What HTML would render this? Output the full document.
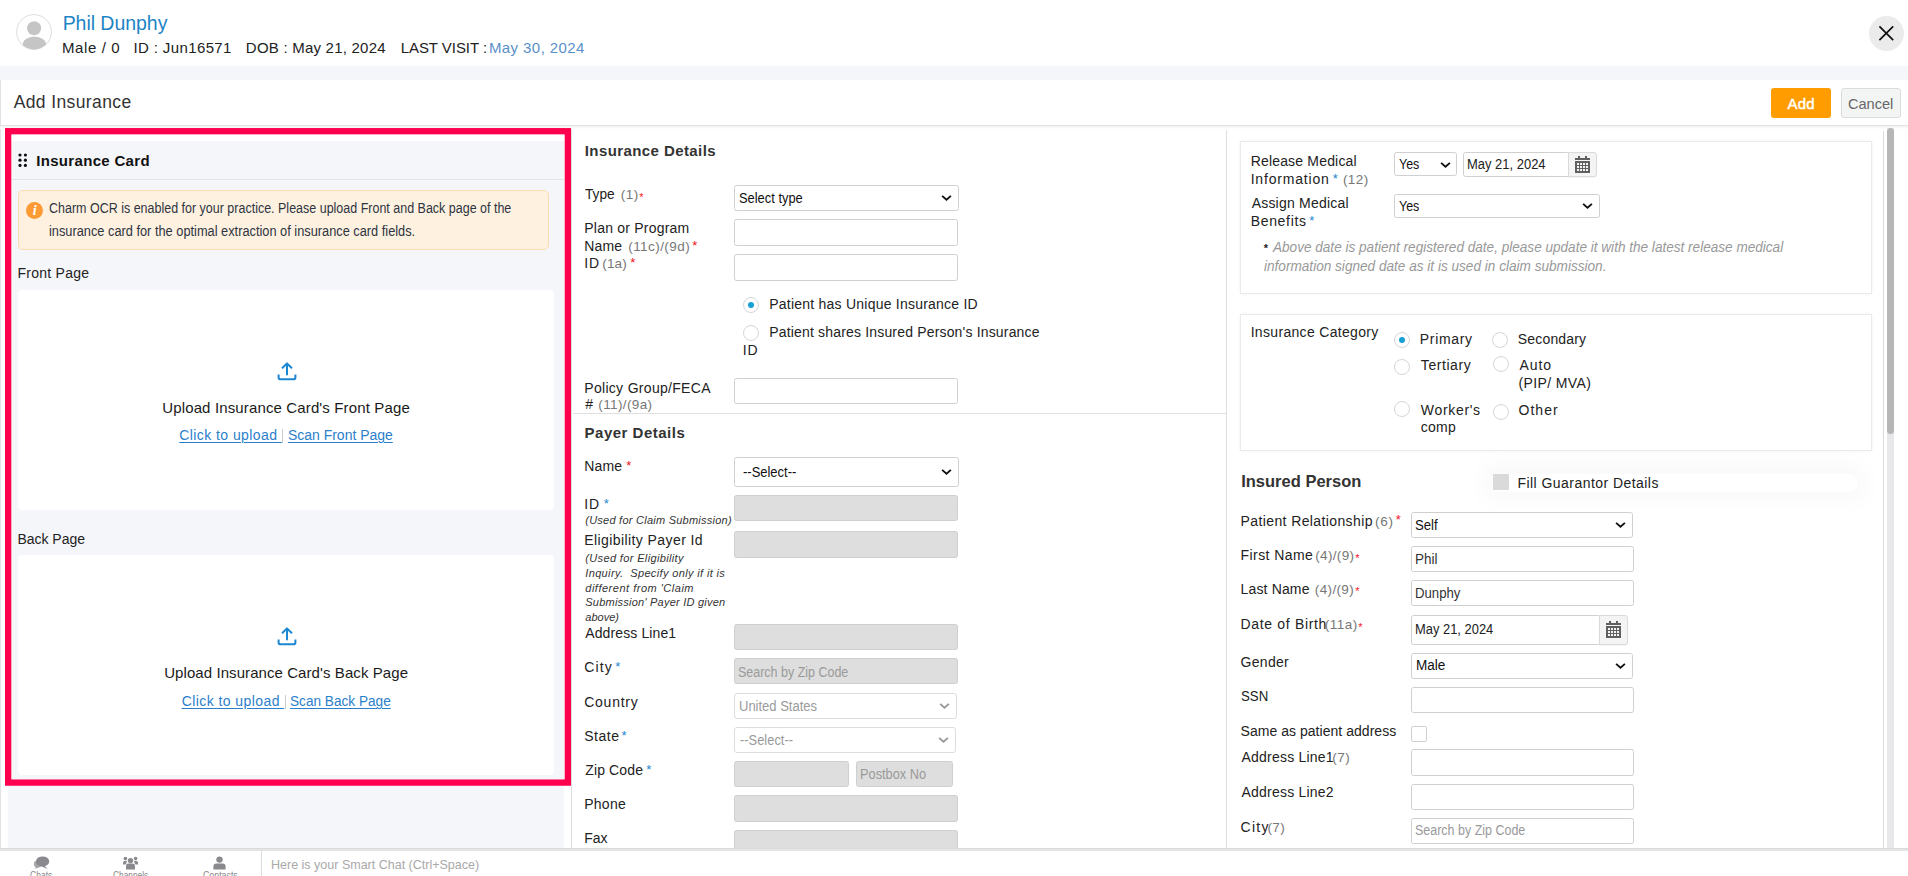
<!DOCTYPE html>
<html lang="en"><head><meta charset="utf-8"><title>Add Insurance</title>
<style>
html,body{margin:0;padding:0;background:#fff;}
body{width:1908px;height:876px;overflow:hidden;font-family:"Liberation Sans",sans-serif;}
#root{position:relative;width:1908px;height:876px;overflow:hidden;background:#fff;}
#root div,#root svg{position:absolute;box-sizing:border-box;}
.t{position:absolute;white-space:pre;line-height:1;transform-origin:0 0;}
.in{background:#fff;border:1px solid #d0d0d0;border-radius:2.5px;}
.dis{background:#dedede;border:1px solid #cfcfcf;border-radius:2.5px;}
.sel2{background:#fff;border:1px solid #ddd;border-radius:3px;}
.card{background:#fff;border:1px solid #ebebeb;box-shadow:0 0 3px rgba(0,0,0,0.06);}
.rad{background:#fff;border:1px solid #d6d6d6;border-radius:50%;}

</style></head><body>
<div id="root">
<div style="left:0px;top:66px;width:1908px;height:14px;background:#f5f6fa;"></div>
<div style="left:0px;top:80px;width:1px;height:768px;background:#e2e2e2;"></div>
<div style="left:0px;top:125px;width:1908px;height:1px;background:#e3e3e3;"></div>
<div style="left:0px;top:126px;width:1908px;height:3px;background:linear-gradient(#f1f1f1,#ffffff);"></div>
<svg style="left:16px;top:14px" width="36" height="36" viewBox="0 0 36 36"><defs><clipPath id="av"><circle cx="18" cy="18" r="17.4"/></clipPath></defs><circle cx="18" cy="18" r="17.4" fill="#fff" stroke="#dcdcdc" stroke-width="1"/><g clip-path="url(#av)" fill="#c5c5c5"><circle cx="18.1" cy="14.3" r="7"/><ellipse cx="18.4" cy="31" rx="11.8" ry="8.6"/></g></svg>
<svg style="left:1869px;top:16px" width="35" height="35" viewBox="0 0 35 35"><circle cx="17.5" cy="17.5" r="17.5" fill="#ebebeb"/><path d="M10.4 10.4 L24.2 24.2 M24.2 10.4 L10.4 24.2" stroke="#111" stroke-width="1.7" fill="none"/></svg>
<div style="left:1771px;top:88px;width:60px;height:30px;background:#ff9c00;border-radius:3px;"></div>
<div style="left:1841px;top:88px;width:60px;height:30px;background:#f3f4f4;border:1px solid #dcdcdc;border-radius:3px;"></div>
<div style="left:8px;top:141px;width:556px;height:707px;background:#f5f6fa;"></div>
<div style="left:12px;top:179px;width:552px;height:1px;background:#e4e6ec;"></div>
<svg style="left:18px;top:153px" width="10" height="15" viewBox="0 0 10 15" fill="#111"><circle cx="2" cy="2" r="1.6"/><circle cx="7.4" cy="2" r="1.6"/><circle cx="2" cy="7.2" r="1.6"/><circle cx="7.4" cy="7.2" r="1.6"/><circle cx="2" cy="12.4" r="1.6"/><circle cx="7.4" cy="12.4" r="1.6"/></svg>
<div style="left:18px;top:190px;width:531px;height:60px;background:#fff1e0;border:1px solid #fcdcae;border-radius:5px;"></div>
<div style="left:26px;top:202px;width:17px;height:17px;background:#fd9a33;border-radius:50%;"></div>
<div style="left:18px;top:290px;width:536px;height:220px;background:#fff;border-radius:4px;"></div>
<div style="left:18px;top:555px;width:536px;height:219.5px;background:#fff;border-radius:4px;"></div>
<svg style="left:276.5px;top:361.6px" width="20" height="19" viewBox="0 0 20 19" fill="none" stroke="#1c86d1" stroke-width="2" stroke-linecap="round" stroke-linejoin="round"><path d="M10 12.5 V2 M5.6 5.8 L10 1.4 L14.4 5.8" /><path d="M1.6 12.6 V15.4 Q1.6 17.2 3.4 17.2 H16.6 Q18.4 17.2 18.4 15.4 V12.6" stroke-linecap="butt"/></svg>
<svg style="left:276.5px;top:626.6px" width="20" height="19" viewBox="0 0 20 19" fill="none" stroke="#1c86d1" stroke-width="2" stroke-linecap="round" stroke-linejoin="round"><path d="M10 12.5 V2 M5.6 5.8 L10 1.4 L14.4 5.8" /><path d="M1.6 12.6 V15.4 Q1.6 17.2 3.4 17.2 H16.6 Q18.4 17.2 18.4 15.4 V12.6" stroke-linecap="butt"/></svg>
<div style="left:282px;top:429px;width:1px;height:14px;background:#ccc;"></div>
<div style="left:284.5px;top:695px;width:1px;height:14px;background:#ccc;"></div>
<div style="left:571px;top:129px;width:1px;height:719px;background:#dedede;"></div>
<div style="left:1226px;top:130px;width:1px;height:718px;background:#dedede;"></div>
<div style="left:1883px;top:131px;width:1px;height:717px;background:#dadada;"></div>
<div style="left:1887px;top:128px;width:7px;height:720px;background:#e8e8ea;"></div>
<div style="left:1887px;top:128px;width:7px;height:305.5px;background:#b6b6b6;border-radius:3.5px;"></div>
<div style="left:573px;top:413px;width:653px;height:1px;background:#e0e0e0;"></div>
<div class="in" style="left:734px;top:185px;width:225px;height:26px;"></div>
<svg style="left:941px;top:195px" width="11" height="7" viewBox="0 0 11 7" fill="none" stroke="#111" stroke-width="1.9" stroke-linejoin="miter"><path d="M1.1 0.9 L5.5 4.7 L9.9 0.9"/></svg>
<div class="in" style="left:734px;top:219px;width:224px;height:27px;"></div>
<div class="in" style="left:734px;top:254px;width:224px;height:27px;"></div>
<div class="rad" style="left:743px;top:297px;width:16px;height:16px;"></div>
<div style="left:748px;top:302px;width:6px;height:6px;border-radius:50%;background:#18a0d4;"></div>
<div class="rad" style="left:743px;top:325px;width:16px;height:16px;"></div>
<div class="in" style="left:734px;top:378px;width:224px;height:26px;"></div>
<div class="in" style="left:734px;top:457px;width:225px;height:30px;"></div>
<svg style="left:941px;top:469px" width="11" height="7" viewBox="0 0 11 7" fill="none" stroke="#111" stroke-width="1.9" stroke-linejoin="miter"><path d="M1.1 0.9 L5.5 4.7 L9.9 0.9"/></svg>
<div class="dis" style="left:734px;top:495px;width:224px;height:26px;"></div>
<div class="dis" style="left:734px;top:531px;width:224px;height:27px;"></div>
<div class="dis" style="left:734px;top:624px;width:224px;height:26px;"></div>
<div class="dis" style="left:734px;top:658px;width:224px;height:26px;"></div>
<div class="sel2" style="left:734px;top:693px;width:223px;height:26px;"></div>
<svg style="left:938.5px;top:703px" width="11" height="7" viewBox="0 0 11 7" fill="none" stroke="#999" stroke-width="1.9" stroke-linejoin="miter"><path d="M1.1 0.9 L5.5 4.7 L9.9 0.9"/></svg>
<div class="sel2" style="left:734px;top:727px;width:222px;height:26px;"></div>
<svg style="left:938px;top:737px" width="11" height="7" viewBox="0 0 11 7" fill="none" stroke="#999" stroke-width="1.9" stroke-linejoin="miter"><path d="M1.1 0.9 L5.5 4.7 L9.9 0.9"/></svg>
<div class="dis" style="left:734px;top:761px;width:115px;height:26px;"></div>
<div class="dis" style="left:856px;top:761px;width:97px;height:26px;"></div>
<div class="dis" style="left:734px;top:795px;width:224px;height:27px;"></div>
<div class="dis" style="left:734px;top:830px;width:224px;height:26px;"></div>
<div class="card" style="left:1240px;top:141px;width:632px;height:153px;"></div>
<div class="card" style="left:1240px;top:313.5px;width:632px;height:137px;"></div>
<div class="in" style="left:1394px;top:152px;width:63px;height:24px;"></div>
<svg style="left:1439.5px;top:161.5px" width="11" height="7" viewBox="0 0 11 7" fill="none" stroke="#111" stroke-width="1.9" stroke-linejoin="miter"><path d="M1.1 0.9 L5.5 4.7 L9.9 0.9"/></svg>
<div class="in" style="left:1463px;top:152px;width:107px;height:25px;"></div>
<div style="left:1568px;top:152px;width:29px;height:25px;background:#f4f4f4;border:1px solid #dadada;border-radius:0 3px 3px 0;box-shadow:0 1px 1px rgba(0,0,0,0.04);"></div>
<svg style="left:1575px;top:156px" width="15" height="17" viewBox="0 0 15 17" shape-rendering="crispEdges"><rect x="3" y="0" width="2" height="2" fill="#606060"/><rect x="10" y="0" width="2" height="2" fill="#606060"/><rect x="0" y="2" width="15" height="2" fill="#606060"/><rect x="0" y="5" width="15" height="12" fill="#606060"/><rect x="2" y="7" width="2" height="2" fill="#f4f4f4"/><rect x="5" y="7" width="2" height="2" fill="#f4f4f4"/><rect x="8" y="7" width="2" height="2" fill="#f4f4f4"/><rect x="11" y="7" width="2" height="2" fill="#f4f4f4"/><rect x="2" y="10" width="2" height="2" fill="#f4f4f4"/><rect x="5" y="10" width="2" height="2" fill="#f4f4f4"/><rect x="8" y="10" width="2" height="2" fill="#f4f4f4"/><rect x="11" y="10" width="2" height="2" fill="#f4f4f4"/><rect x="2" y="13" width="2" height="2" fill="#f4f4f4"/><rect x="5" y="13" width="2" height="2" fill="#f4f4f4"/><rect x="8" y="13" width="2" height="2" fill="#f4f4f4"/><rect x="11" y="13" width="2" height="2" fill="#f4f4f4"/></svg>
<div class="in" style="left:1394px;top:194px;width:206px;height:24px;"></div>
<svg style="left:1582px;top:203px" width="11" height="7" viewBox="0 0 11 7" fill="none" stroke="#111" stroke-width="1.9" stroke-linejoin="miter"><path d="M1.1 0.9 L5.5 4.7 L9.9 0.9"/></svg>
<div class="rad" style="left:1393.8px;top:331.8px;width:16px;height:16px;"></div>
<div style="left:1398.8px;top:336.8px;width:6px;height:6px;border-radius:50%;background:#18a0d4;"></div>
<div class="rad" style="left:1491.8px;top:331.8px;width:16px;height:16px;"></div>
<div class="rad" style="left:1393.8px;top:358.8px;width:16px;height:16px;"></div>
<div class="rad" style="left:1492.8px;top:356.1px;width:16px;height:16px;"></div>
<div class="rad" style="left:1393.8px;top:401px;width:16px;height:16px;"></div>
<div class="rad" style="left:1492.8px;top:403.8px;width:16px;height:16px;"></div>
<div style="left:1493px;top:473.5px;width:365px;height:18.5px;background:#fff;border-radius:2px 9px 9px 2px;box-shadow:0 0 24px 8px rgba(0,0,0,0.032);"></div>
<div style="left:1493px;top:474px;width:16px;height:16px;background:#dadada;"></div>
<div class="in" style="left:1411px;top:512px;width:222px;height:26px;"></div>
<svg style="left:1615px;top:522px" width="11" height="7" viewBox="0 0 11 7" fill="none" stroke="#111" stroke-width="1.9" stroke-linejoin="miter"><path d="M1.1 0.9 L5.5 4.7 L9.9 0.9"/></svg>
<div class="in" style="left:1411px;top:546px;width:223px;height:26px;"></div>
<div class="in" style="left:1411px;top:580px;width:223px;height:26px;"></div>
<div class="in" style="left:1411px;top:615px;width:190px;height:30px;"></div>
<div style="left:1599px;top:615px;width:29px;height:30px;background:#f4f4f4;border:1px solid #dadada;border-radius:0 3px 3px 0;box-shadow:0 1px 1px rgba(0,0,0,0.04);"></div>
<svg style="left:1606px;top:621px" width="15" height="17" viewBox="0 0 15 17" shape-rendering="crispEdges"><rect x="3" y="0" width="2" height="2" fill="#606060"/><rect x="10" y="0" width="2" height="2" fill="#606060"/><rect x="0" y="2" width="15" height="2" fill="#606060"/><rect x="0" y="5" width="15" height="12" fill="#606060"/><rect x="2" y="7" width="2" height="2" fill="#f4f4f4"/><rect x="5" y="7" width="2" height="2" fill="#f4f4f4"/><rect x="8" y="7" width="2" height="2" fill="#f4f4f4"/><rect x="11" y="7" width="2" height="2" fill="#f4f4f4"/><rect x="2" y="10" width="2" height="2" fill="#f4f4f4"/><rect x="5" y="10" width="2" height="2" fill="#f4f4f4"/><rect x="8" y="10" width="2" height="2" fill="#f4f4f4"/><rect x="11" y="10" width="2" height="2" fill="#f4f4f4"/><rect x="2" y="13" width="2" height="2" fill="#f4f4f4"/><rect x="5" y="13" width="2" height="2" fill="#f4f4f4"/><rect x="8" y="13" width="2" height="2" fill="#f4f4f4"/><rect x="11" y="13" width="2" height="2" fill="#f4f4f4"/></svg>
<div class="in" style="left:1411px;top:653px;width:222px;height:26px;"></div>
<svg style="left:1615px;top:663px" width="11" height="7" viewBox="0 0 11 7" fill="none" stroke="#111" stroke-width="1.9" stroke-linejoin="miter"><path d="M1.1 0.9 L5.5 4.7 L9.9 0.9"/></svg>
<div class="in" style="left:1411px;top:687px;width:223px;height:26px;"></div>
<div style="left:1411px;top:726px;width:16px;height:16px;background:#fff;border:1px solid #d0d0d0;border-radius:2px;"></div>
<div class="in" style="left:1411px;top:749px;width:223px;height:27px;"></div>
<div class="in" style="left:1411px;top:784px;width:223px;height:26px;"></div>
<div class="in" style="left:1411px;top:818px;width:223px;height:26px;"></div>
<div style="left:0px;top:848px;width:1908px;height:28px;background:#fff;"></div>
<div style="left:0px;top:848px;width:1908px;height:1px;background:#dbdbdb;"></div>
<div style="left:0px;top:849px;width:1908px;height:2px;background:#e3e4e6;"></div>
<div style="left:261px;top:851px;width:1px;height:25px;background:#dcdcdc;"></div>
<svg style="left:33px;top:856px" width="17" height="14" viewBox="0 0 17 14" fill="#8a8a8e"><ellipse cx="9.6" cy="5.4" rx="6.6" ry="5"/><path d="M11 9 L14.4 13 L8 10z"/><ellipse cx="5" cy="8" rx="4.2" ry="3.4" opacity="0.75"/><path d="M3 10.4 L1.6 13 L6 11z" opacity="0.75"/></svg>
<svg style="left:123px;top:856px" width="15" height="14" viewBox="0 0 15 14" fill="#8a8a8e"><circle cx="7.5" cy="4.6" r="2.7"/><path d="M3 13.4 V10 Q3 7.6 5.4 7.6 H9.6 Q12 7.6 12 10 V13.4z"/><circle cx="2.4" cy="2.6" r="1.8"/><circle cx="12.6" cy="2.6" r="1.8"/><path d="M0 8.6 V6.6 Q0 5 1.6 5 H4 Q3.6 7 2.6 8.6z"/><path d="M15 8.6 V6.6 Q15 5 13.4 5 H11 Q11.4 7 12.4 8.6z"/></svg>
<svg style="left:213px;top:856px" width="13" height="14" viewBox="0 0 13 14" fill="#8a8a8e"><circle cx="6.5" cy="3.6" r="3.2"/><path d="M0.4 13.6 V10.4 Q0.4 7.4 3.4 7.4 H9.6 Q12.6 7.4 12.6 10.4 V13.6z"/></svg>
<svg style="left:0;top:0" width="580" height="800" viewBox="0 0 580 800"><rect x="8.15" y="131.2" width="559.7" height="651.4" fill="none" stroke="#ff004f" stroke-width="6.3"/></svg>
<span class="t" style="left:62.65px;top:12px;line-height:22px;font-size:19.5px;color:#1d84c6;letter-spacing:-0.040px;">Phil Dunphy</span>
<span class="t" style="left:61.95px;top:39px;line-height:17px;font-size:15px;color:#222;letter-spacing:0.629px;">Male / 0</span>
<span class="t" style="left:133.45px;top:39px;line-height:17px;font-size:15px;color:#222;letter-spacing:0.383px;">ID : Jun16571</span>
<span class="t" style="left:245.85px;top:39px;line-height:17px;font-size:15px;color:#222;letter-spacing:0.224px;">DOB : May 21, 2024</span>
<span class="t" style="left:400.65px;top:39px;line-height:17px;font-size:15px;color:#222;letter-spacing:-0.045px;">LAST VISIT :</span>
<span class="t" style="left:488.95px;top:39px;line-height:17px;font-size:15px;color:#5b90c9;letter-spacing:0.418px;">May 30, 2024</span>
<span class="t" style="left:13.65px;top:92px;line-height:20px;font-size:17.5px;color:#333;letter-spacing:0.392px;">Add Insurance</span>
<span class="t" style="left:1787.45px;top:95px;line-height:17px;font-size:15px;color:#fff;letter-spacing:0.250px;-webkit-text-stroke:0.45px #fff;">Add</span>
<span class="t" style="left:1848.28px;top:95px;line-height:17px;font-size:15px;color:#666;transform:scaleX(0.9709);">Cancel</span>
<span class="t" style="left:36.25px;top:152px;line-height:17px;font-size:15px;color:#111;font-weight:700;letter-spacing:0.315px;">Insurance Card</span>
<span class="t" style="left:32.85px;top:203px;line-height:16px;font-size:14px;color:#fff;font-weight:700;font-style:italic;font-family:'Liberation Serif',serif;">i</span>
<span class="t" style="left:48.77px;top:200px;line-height:16px;font-size:14px;color:#2d3542;transform:scaleX(0.8920);">Charm OCR is enabled for your practice. Please upload Front and Back page of the</span>
<span class="t" style="left:48.75px;top:223px;line-height:16px;font-size:14px;color:#2d3542;transform:scaleX(0.9137);">insurance card for the optimal extraction of insurance card fields.</span>
<span class="t" style="left:17.45px;top:265px;line-height:16px;font-size:14px;color:#222;letter-spacing:0.256px;">Front Page</span>
<span class="t" style="left:162.25px;top:399px;line-height:17px;font-size:15px;color:#1a1a1a;letter-spacing:0.136px;">Upload Insurance Card's Front Page</span>
<span class="t" style="left:179.25px;top:427px;line-height:16px;font-size:14px;color:#2b80cb;letter-spacing:0.429px;text-decoration:underline;text-underline-offset:2px;text-decoration-thickness:1px;">Click to upload </span>
<span class="t" style="left:287.95px;top:427px;line-height:16px;font-size:14px;color:#2b80cb;letter-spacing:-0.014px;text-decoration:underline;text-underline-offset:2px;text-decoration-thickness:1px;">Scan Front Page</span>
<span class="t" style="left:17.45px;top:531px;line-height:16px;font-size:14px;color:#222;letter-spacing:-0.025px;">Back Page</span>
<span class="t" style="left:164.15px;top:664px;line-height:17px;font-size:15px;color:#1a1a1a;letter-spacing:0.078px;">Upload Insurance Card's Back Page</span>
<span class="t" style="left:181.65px;top:693px;line-height:16px;font-size:14px;color:#2b80cb;letter-spacing:0.429px;text-decoration:underline;text-underline-offset:2px;text-decoration-thickness:1px;">Click to upload </span>
<span class="t" style="left:289.78px;top:693px;line-height:16px;font-size:14px;color:#2b80cb;transform:scaleX(0.9735);text-decoration:underline;text-underline-offset:2px;text-decoration-thickness:1px;">Scan Back Page</span>
<span class="t" style="left:584.75px;top:142px;line-height:17px;font-size:15px;color:#333;font-weight:700;letter-spacing:0.412px;">Insurance Details</span>
<span class="t" style="left:585.25px;top:186px;line-height:16px;font-size:14px;color:#222;transform:scaleX(0.9764);">Type</span>
<span class="t" style="left:620.75px;top:187px;line-height:15px;font-size:13.5px;color:#777;letter-spacing:0.450px;">(1)</span>
<span class="t" style="left:639.25px;top:191px;line-height:12px;font-size:11px;color:#f3141f;">*</span>
<span class="t" style="left:584.25px;top:220px;line-height:16px;font-size:14px;color:#222;letter-spacing:0.221px;">Plan or Program</span>
<span class="t" style="left:584.25px;top:238px;line-height:16px;font-size:14px;color:#222;letter-spacing:0.133px;">Name</span>
<span class="t" style="left:628.25px;top:239px;line-height:15px;font-size:13.5px;color:#777;letter-spacing:0.433px;">(11c)/(9d)</span>
<span class="t" style="left:692.25px;top:238px;line-height:15px;font-size:13px;color:#f3141f;">*</span>
<span class="t" style="left:584.25px;top:255px;line-height:16px;font-size:14px;color:#222;letter-spacing:0.900px;">ID</span>
<span class="t" style="left:602.25px;top:256px;line-height:15px;font-size:13.5px;color:#777;letter-spacing:0.133px;">(1a)</span>
<span class="t" style="left:630.25px;top:255px;line-height:15px;font-size:13px;color:#f3141f;">*</span>
<span class="t" style="left:738.84px;top:190px;line-height:16px;font-size:14px;color:#111;transform:scaleX(0.9202);">Select type</span>
<span class="t" style="left:769.25px;top:296px;line-height:16px;font-size:14px;color:#222;letter-spacing:0.230px;">Patient has Unique Insurance ID</span>
<span class="t" style="left:769.25px;top:324px;line-height:16px;font-size:14px;color:#222;letter-spacing:0.172px;">Patient shares Insured Person's Insurance</span>
<span class="t" style="left:742.65px;top:342px;line-height:16px;font-size:14px;color:#222;letter-spacing:0.900px;">ID</span>
<span class="t" style="left:584.25px;top:380px;line-height:16px;font-size:14px;color:#222;letter-spacing:0.306px;">Policy Group/FECA</span>
<span class="t" style="left:585.15px;top:396px;line-height:16px;font-size:14px;color:#222;">#</span>
<span class="t" style="left:598.25px;top:397px;line-height:15px;font-size:13.5px;color:#777;letter-spacing:0.387px;">(11)/(9a)</span>
<span class="t" style="left:584.55px;top:424px;line-height:17px;font-size:15px;color:#333;font-weight:700;letter-spacing:0.500px;">Payer Details</span>
<span class="t" style="left:584.25px;top:458px;line-height:16px;font-size:14px;color:#222;letter-spacing:0.133px;">Name</span>
<span class="t" style="left:626.25px;top:458px;line-height:15px;font-size:13px;color:#f3141f;">*</span>
<span class="t" style="left:742.56px;top:464px;line-height:16px;font-size:14px;color:#111;transform:scaleX(0.9259);">--Select--</span>
<span class="t" style="left:584.25px;top:496px;line-height:16px;font-size:14px;color:#222;letter-spacing:0.900px;">ID</span>
<span class="t" style="left:603.75px;top:496px;line-height:15px;font-size:13px;color:#1c86d1;">*</span>
<span class="t" style="left:585.25px;top:514px;line-height:12px;font-size:11px;color:#333;font-style:italic;letter-spacing:0.246px;">(Used for Claim Submission)</span>
<span class="t" style="left:584.25px;top:532px;line-height:16px;font-size:14px;color:#222;letter-spacing:0.416px;">Eligibility Payer Id</span>
<span class="t" style="left:585.25px;top:552px;line-height:12px;font-size:11px;color:#333;font-style:italic;letter-spacing:0.360px;">(Used for Eligibility</span>
<span class="t" style="left:585.25px;top:567px;line-height:12px;font-size:11px;color:#333;font-style:italic;letter-spacing:0.360px;">Inquiry.  Specify only if it is</span>
<span class="t" style="left:585.25px;top:582px;line-height:12px;font-size:11px;color:#333;font-style:italic;letter-spacing:0.510px;">different from 'Claim</span>
<span class="t" style="left:585.25px;top:596px;line-height:12px;font-size:11px;color:#333;font-style:italic;letter-spacing:0.232px;">Submission' Payer ID given</span>
<span class="t" style="left:585.25px;top:611px;line-height:12px;font-size:11px;color:#333;font-style:italic;letter-spacing:0.020px;">above)</span>
<span class="t" style="left:585.25px;top:625px;line-height:16px;font-size:14px;color:#222;letter-spacing:0.117px;">Address Line1</span>
<span class="t" style="left:584.25px;top:659px;line-height:16px;font-size:14px;color:#222;letter-spacing:1.100px;">City</span>
<span class="t" style="left:615.25px;top:659px;line-height:15px;font-size:13px;color:#1c86d1;">*</span>
<span class="t" style="left:737.87px;top:664px;line-height:16px;font-size:14px;color:#9a9a9a;transform:scaleX(0.8915);">Search by Zip Code</span>
<span class="t" style="left:584.25px;top:694px;line-height:16px;font-size:14px;color:#222;letter-spacing:0.733px;">Country</span>
<span class="t" style="left:738.83px;top:698px;line-height:16px;font-size:14px;color:#9a9a9a;transform:scaleX(0.9287);">United States</span>
<span class="t" style="left:584.25px;top:728px;line-height:16px;font-size:14px;color:#222;letter-spacing:0.500px;">State</span>
<span class="t" style="left:621.45px;top:728px;line-height:15px;font-size:13px;color:#1c86d1;">*</span>
<span class="t" style="left:739.76px;top:732px;line-height:16px;font-size:14px;color:#9a9a9a;transform:scaleX(0.9206);">--Select--</span>
<span class="t" style="left:585.25px;top:762px;line-height:16px;font-size:14px;color:#222;letter-spacing:0.129px;">Zip Code</span>
<span class="t" style="left:646.25px;top:762px;line-height:15px;font-size:13px;color:#1c86d1;">*</span>
<span class="t" style="left:859.95px;top:766px;line-height:16px;font-size:14px;color:#9a9a9a;transform:scaleX(0.9137);">Postbox No</span>
<span class="t" style="left:584.25px;top:796px;line-height:16px;font-size:14px;color:#222;letter-spacing:0.250px;">Phone</span>
<span class="t" style="left:584.25px;top:830px;line-height:16px;font-size:14px;color:#222;">Fax</span>
<span class="t" style="left:1250.65px;top:153px;line-height:16px;font-size:14px;color:#222;letter-spacing:0.179px;">Release Medical</span>
<span class="t" style="left:1250.65px;top:171px;line-height:16px;font-size:14px;color:#222;letter-spacing:0.820px;">Information</span>
<span class="t" style="left:1332.75px;top:171px;line-height:15px;font-size:13px;color:#1c86d1;">*</span>
<span class="t" style="left:1342.95px;top:172px;line-height:15px;font-size:13.5px;color:#777;letter-spacing:0.433px;">(12)</span>
<span class="t" style="left:1251.65px;top:195px;line-height:16px;font-size:14px;color:#222;letter-spacing:0.215px;">Assign Medical</span>
<span class="t" style="left:1250.65px;top:213px;line-height:16px;font-size:14px;color:#222;letter-spacing:0.686px;">Benefits</span>
<span class="t" style="left:1309.25px;top:213px;line-height:15px;font-size:13px;color:#1c86d1;">*</span>
<span class="t" style="left:1399.17px;top:156px;line-height:16px;font-size:14px;color:#111;transform:scaleX(0.8894);">Yes</span>
<span class="t" style="left:1466.94px;top:156px;line-height:16px;font-size:14px;color:#222;transform:scaleX(0.9259);">May 21, 2024</span>
<span class="t" style="left:1399.17px;top:198px;line-height:16px;font-size:14px;color:#111;transform:scaleX(0.8894);">Yes</span>
<span class="t" style="left:1263.85px;top:242px;line-height:12px;font-size:11px;color:#222;font-weight:700;">*</span>
<span class="t" style="left:1272.82px;top:239px;line-height:16px;font-size:14px;color:#999;font-style:italic;transform:scaleX(0.9697);">Above date is patient registered date, please update it with the latest release medical</span>
<span class="t" style="left:1263.55px;top:258px;line-height:16px;font-size:14px;color:#999;font-style:italic;transform:scaleX(0.9715);">information signed date as it is used in claim submission.</span>
<span class="t" style="left:1250.65px;top:324px;line-height:16px;font-size:14px;color:#222;letter-spacing:0.324px;">Insurance Category</span>
<span class="t" style="left:1419.85px;top:331px;line-height:16px;font-size:14px;color:#222;letter-spacing:0.667px;">Primary</span>
<span class="t" style="left:1517.85px;top:331px;line-height:16px;font-size:14px;color:#222;letter-spacing:0.163px;">Secondary</span>
<span class="t" style="left:1420.85px;top:357px;line-height:16px;font-size:14px;color:#222;letter-spacing:0.557px;">Tertiary</span>
<span class="t" style="left:1519.45px;top:357px;line-height:16px;font-size:14px;color:#222;letter-spacing:0.933px;">Auto</span>
<span class="t" style="left:1518.45px;top:375px;line-height:16px;font-size:14px;color:#222;letter-spacing:0.389px;">(PIP/ MVA)</span>
<span class="t" style="left:1420.85px;top:402px;line-height:16px;font-size:14px;color:#222;letter-spacing:0.671px;">Worker's</span>
<span class="t" style="left:1420.85px;top:419px;line-height:16px;font-size:14px;color:#222;letter-spacing:0.200px;">comp</span>
<span class="t" style="left:1518.45px;top:402px;line-height:16px;font-size:14px;color:#222;letter-spacing:1.075px;">Other</span>
<span class="t" style="left:1241.15px;top:472px;line-height:18px;font-size:16.5px;color:#333;font-weight:700;letter-spacing:0.008px;">Insured Person</span>
<span class="t" style="left:1517.45px;top:475px;line-height:16px;font-size:14px;color:#222;letter-spacing:0.452px;">Fill Guarantor Details</span>
<span class="t" style="left:1240.55px;top:513px;line-height:16px;font-size:14px;color:#222;letter-spacing:0.389px;">Patient Relationship</span>
<span class="t" style="left:1375.05px;top:514px;line-height:15px;font-size:13.5px;color:#777;letter-spacing:0.700px;">(6)</span>
<span class="t" style="left:1395.85px;top:512px;line-height:15px;font-size:13px;color:#f3141f;">*</span>
<span class="t" style="left:1415.12px;top:517px;line-height:16px;font-size:14px;color:#111;transform:scaleX(0.9383);">Self</span>
<span class="t" style="left:1240.55px;top:547px;line-height:16px;font-size:14px;color:#222;letter-spacing:0.422px;">First Name</span>
<span class="t" style="left:1315.15px;top:548px;line-height:15px;font-size:13.5px;color:#777;letter-spacing:0.367px;">(4)/(9)</span>
<span class="t" style="left:1355.25px;top:552px;line-height:12px;font-size:11px;color:#f3141f;">*</span>
<span class="t" style="left:1415.09px;top:551px;line-height:16px;font-size:14px;color:#333;transform:scaleX(0.9631);">Phil</span>
<span class="t" style="left:1240.55px;top:581px;line-height:16px;font-size:14px;color:#222;letter-spacing:0.150px;">Last Name</span>
<span class="t" style="left:1314.85px;top:582px;line-height:15px;font-size:13.5px;color:#777;letter-spacing:0.350px;">(4)/(9)</span>
<span class="t" style="left:1355.25px;top:585px;line-height:12px;font-size:11px;color:#f3141f;">*</span>
<span class="t" style="left:1415.12px;top:585px;line-height:16px;font-size:14px;color:#333;transform:scaleX(0.9422);">Dunphy</span>
<span class="t" style="left:1240.55px;top:616px;line-height:16px;font-size:14px;color:#222;letter-spacing:0.667px;">Date of Birth</span>
<span class="t" style="left:1324.85px;top:617px;line-height:15px;font-size:13.5px;color:#777;letter-spacing:0.500px;">(11a)</span>
<span class="t" style="left:1358.25px;top:621px;line-height:12px;font-size:11px;color:#f3141f;">*</span>
<span class="t" style="left:1415.14px;top:621px;line-height:16px;font-size:14px;color:#222;transform:scaleX(0.9223);">May 21, 2024</span>
<span class="t" style="left:1240.55px;top:654px;line-height:16px;font-size:14px;color:#222;letter-spacing:0.300px;">Gender</span>
<span class="t" style="left:1415.79px;top:657px;line-height:16px;font-size:14px;color:#111;transform:scaleX(0.9686);">Male</span>
<span class="t" style="left:1240.61px;top:688px;line-height:16px;font-size:14px;color:#222;transform:scaleX(0.9438);">SSN</span>
<span class="t" style="left:1240.55px;top:723px;line-height:16px;font-size:14px;color:#222;letter-spacing:0.036px;">Same as patient address</span>
<span class="t" style="left:1241.55px;top:749px;line-height:16px;font-size:14px;color:#222;letter-spacing:0.208px;">Address Line1</span>
<span class="t" style="left:1332.25px;top:750px;line-height:15px;font-size:13.5px;color:#777;letter-spacing:0.500px;">(7)</span>
<span class="t" style="left:1241.55px;top:784px;line-height:16px;font-size:14px;color:#222;letter-spacing:0.208px;">Address Line2</span>
<span class="t" style="left:1240.55px;top:819px;line-height:16px;font-size:14px;color:#222;letter-spacing:1.267px;">City</span>
<span class="t" style="left:1267.45px;top:820px;line-height:15px;font-size:13.5px;color:#777;letter-spacing:0.350px;">(7)</span>
<span class="t" style="left:1414.87px;top:822px;line-height:16px;font-size:14px;color:#9a9a9a;transform:scaleX(0.8915);">Search by Zip Code</span>
<span class="t" style="left:30.37px;top:870px;line-height:11px;font-size:10px;color:#8a8a8e;transform:scaleX(0.8560);">Chats</span>
<span class="t" style="left:113.07px;top:870px;line-height:11px;font-size:10px;color:#8a8a8e;transform:scaleX(0.8345);">Channels</span>
<span class="t" style="left:202.57px;top:870px;line-height:11px;font-size:10px;color:#8a8a8e;transform:scaleX(0.8811);">Contacts</span>
<span class="t" style="left:270.53px;top:857px;line-height:15px;font-size:13.5px;color:#a9a9a9;transform:scaleX(0.9264);">Here is your Smart Chat (Ctrl+Space)</span>
</div>
</body></html>
